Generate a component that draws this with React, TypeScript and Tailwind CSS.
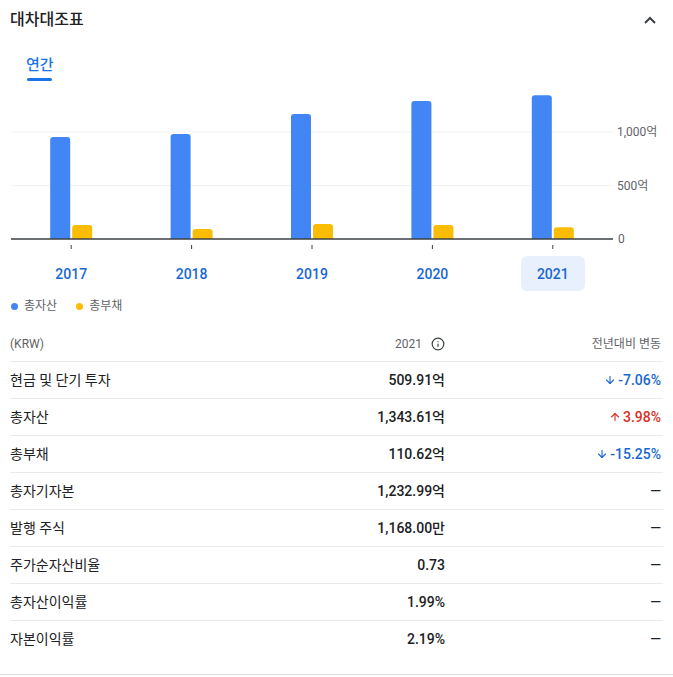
import { ArrowDown, ArrowUp, Info } from "lucide-react"

const FONT = "font-['Roboto','Noto_Sans_CJK_KR',sans-serif]"

const YEARS = [
  { year: "2017", assets: 953, liabilities: 131 },
  { year: "2018", assets: 981, liabilities: 93 },
  { year: "2019", assets: 1168, liabilities: 140 },
  { year: "2020", assets: 1290, liabilities: 131 },
  { year: "2021", assets: 1343.61, liabilities: 110.62 },
]

const ROWS: { label: string; value: string; change?: string; dir?: "up" | "down" }[] = [
  { label: "현금 및 단기 투자", value: "509.91억", change: "-7.06%", dir: "down" },
  { label: "총자산", value: "1,343.61억", change: "3.98%", dir: "up" },
  { label: "총부채", value: "110.62억", change: "-15.25%", dir: "down" },
  { label: "총자기자본", value: "1,232.99억" },
  { label: "발행 주식", value: "1,168.00만" },
  { label: "주가순자산비율", value: "0.73" },
  { label: "총자산이익률", value: "1.99%" },
  { label: "자본이익률", value: "2.19%" },
]

// chart geometry (page coordinates)
const LEFT = 11
const RIGHT = 613
const BASE = 239
const SCALE = 107 / 1000
const SLOT = (RIGHT - LEFT) / YEARS.length

function bar(x: number, w: number, h: number, r = 3) {
  const top = BASE - h
  return `M${x} ${BASE} V${top + r} Q${x} ${top} ${x + r} ${top} H${x + w - r} Q${x + w} ${top} ${x + w} ${top + r} V${BASE} Z`
}

function Chart() {
  return (
    <svg width="673" height="167" viewBox="0 85 673 167" className="block">
      <line x1={LEFT} x2={RIGHT} y1={132} y2={132} stroke="#f1f3f4" strokeWidth="1" />
      <line x1={LEFT} x2={RIGHT} y1={185.5} y2={185.5} stroke="#f1f3f4" strokeWidth="1" />
      {YEARS.map((d, i) => {
        const c = LEFT + SLOT * (i + 0.5)
        return (
          <g key={d.year}>
            <path d={bar(c - 21, 20, d.assets * SCALE)} fill="#4285f4" />
            <path d={bar(c + 1, 20, d.liabilities * SCALE)} fill="#fbbc04" />
            <line x1={c} x2={c} y1={245} y2={249} stroke="#3c4043" strokeWidth="1" />
          </g>
        )
      })}
      <line x1={LEFT} x2={RIGHT} y1={BASE} y2={BASE} stroke="#3c4043" strokeWidth="1.5" />
      <g fontFamily="Roboto, 'Noto Sans CJK KR', sans-serif" fontSize="12" fill="#5f6368" dominantBaseline="central">
        <text x="617" y="132">1,000억</text>
        <text x="617" y="186">500억</text>
        <text x="618" y="239">0</text>
      </g>
    </svg>
  )
}

export default function App() {
  return (
    <div className={`${FONT} w-[673px] h-[677px] bg-white text-[#202124]`}>
      <div className="flex items-center justify-between h-[40px] pl-[10px] pr-[16px]">
        <h2 className="text-[16px] font-medium">대차대조표</h2>
        <svg width="12" height="8" viewBox="0 0 12 8" className="mr-[1px]">
          <path d="M1 7 L6 2 L11 7" fill="none" stroke="#3c4043" strokeWidth="2" />
        </svg>
      </div>

      <div className="pl-[26px] mt-[15px]">
        <div className="text-[15px] leading-[20px] font-medium text-[#1a73e8]">연간</div>
        <div className="ml-[1px] mt-[3px] w-[25px] h-[3px] rounded-full bg-[#1a73e8]" />
      </div>

      <div className="mt-[4px]">
        <Chart />
      </div>

      <div className="ml-[11px] w-[602px] mt-[4px] grid grid-cols-5">
        {YEARS.map((d) => (
          <div key={d.year} className="flex justify-center">
            <button
              className={`w-[64px] h-[35px] pt-[2px] rounded-md text-[14px] font-medium text-[#1967d2] ${
                d.year === "2021" ? "bg-[#e8f0fe]" : ""
              }`}
            >
              {d.year}
            </button>
          </div>
        ))}
      </div>

      <div className="flex items-center h-[16px] mt-[7px] pl-[11px] text-[12px] text-[#5f6368]">
        <span className="w-[7px] h-[7px] rounded-full bg-[#4285f4]" />
        <span className="ml-[6px]">총자산</span>
        <span className="ml-[19px] w-[7px] h-[7px] rounded-full bg-[#fbbc04]" />
        <span className="ml-[6px]">총부채</span>
      </div>

      <div className="mx-[10px] mt-[11px]">
        <div className="grid grid-cols-[235px_200px_216px] items-center h-[37px] pt-[1px] border-b border-[#e8eaed] text-[12px] text-[#5f6368]">
          <div>(KRW)</div>
          <div className="flex items-center justify-end gap-[9px]">
            <span>2021</span>
            <Info size={14} strokeWidth={2} className="text-[#3c4043]" />
          </div>
          <div className="text-right">전년대비 변동</div>
        </div>
        {ROWS.map((r, i) => (
          <div
            key={r.label}
            className={`grid grid-cols-[235px_200px_216px] items-center h-[37px] text-[14px] ${
              i < ROWS.length - 1 ? "border-b border-[#e8eaed]" : ""
            }`}
          >
            <div>{r.label}</div>
            <div className="text-right font-medium">{r.value}</div>
            <div className="flex items-center justify-end font-medium">
              {r.change ? (
                <span
                  className={`flex items-center gap-[2px] ${
                    r.dir === "up" ? "text-[#d93025]" : "text-[#1967d2]"
                  }`}
                >
                  {r.dir === "up" ? (
                    <ArrowUp size={12} strokeWidth={2.25} />
                  ) : (
                    <ArrowDown size={12} strokeWidth={2.25} />
                  )}
                  {r.change}
                </span>
              ) : (
                <span className="text-[#202124]">—</span>
              )}
            </div>
          </div>
        ))}
      </div>
      <div className="mt-[16px] border-t border-[#dadce0]" />
    </div>
  )
}
